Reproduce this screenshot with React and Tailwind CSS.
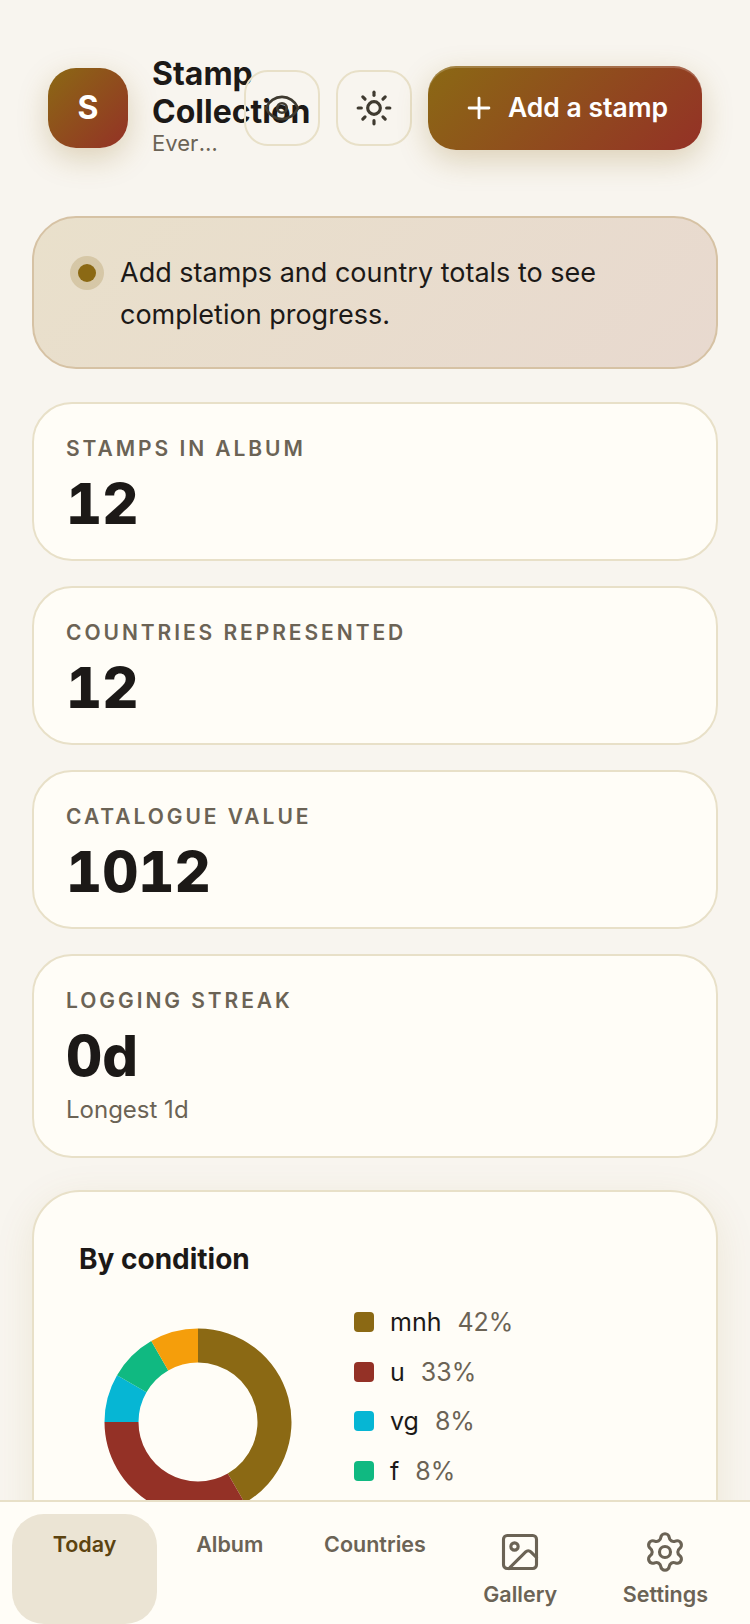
import { Eye, Sun, Plus, Image, Settings } from 'lucide-react';

const stats = [
  { label: 'Stamps in album', value: '12' },
  { label: 'Countries represented', value: '12' },
  { label: 'Catalogue value', value: '1012' },
  { label: 'Logging streak', value: '0d', sub: 'Longest 1d' },
];

const legend = [
  { label: 'mnh', pct: '42%', swatch: 'bg-[#8b6914]' },
  { label: 'u', pct: '33%', swatch: 'bg-[#943126]' },
  { label: 'vg', pct: '8%', swatch: 'bg-[#06b6d4]' },
  { label: 'f', pct: '8%', swatch: 'bg-[#10b981]' },
];

const slices = [
  { share: 5 / 12, color: '#8b6914' },
  { share: 4 / 12, color: '#943126' },
  { share: 1 / 12, color: '#06b6d4' },
  { share: 1 / 12, color: '#10b981' },
  { share: 1 / 12, color: '#f59e0b' },
];

const navItems = [
  { label: 'Today', active: true },
  { label: 'Album' },
  { label: 'Countries' },
  { label: 'Gallery', icon: Image },
  { label: 'Settings', icon: Settings },
];

const Donut = () => {
  const outer = 93.5;
  const inner = 59.5;
  const point = (r, turn) => {
    const a = turn * 2 * Math.PI;
    return `${(100 + r * Math.sin(a)).toFixed(2)} ${(100 - r * Math.cos(a)).toFixed(2)}`;
  };
  let start = 0;
  return (
    <svg width="200" height="200" viewBox="0 0 200 200">
      {slices.map(({ share, color }) => {
        const end = start + share;
        const large = share > 0.5 ? 1 : 0;
        const d = `M${point(outer, start)} A${outer} ${outer} 0 ${large} 1 ${point(outer, end)} L${point(inner, end)} A${inner} ${inner} 0 ${large} 0 ${point(inner, start)} Z`;
        start = end;
        return <path key={color} d={d} fill={color} />;
      })}
    </svg>
  );
};

const App = () => {
  return (
    <div className="relative h-[1624px] w-full overflow-hidden bg-[#f8f5ef] font-['Inter',sans-serif] text-[#1c1917]">
      {/* Header */}
      <header className="mx-[48px] mt-[66px] flex h-[84px] items-center gap-[16px]">
        <div className="flex min-w-0 flex-1 items-center gap-[24px]">
          <div className="flex h-[80px] w-[80px] shrink-0 items-center justify-center rounded-[28px] bg-[linear-gradient(135deg,#8b6914,#943126)] text-[32px] font-bold text-white shadow-[0_10px_30px_rgba(139,105,20,0.25)]">
            S
          </div>
          <div className="min-w-0 flex-1 pb-[6px]">
            <h1 className="text-[32px] leading-[38px] font-bold">Stamp Collection</h1>
            <p className="truncate text-[22px] leading-[24px] text-[#6b6355]">Every stamp</p>
          </div>
        </div>
        <button className="flex h-[76px] w-[76px] shrink-0 items-center justify-center rounded-[24px] border-2 border-[#e8e0c8] text-[#3f3a30]">
          <Eye size={38} strokeWidth={1.7} />
        </button>
        <button className="flex h-[76px] w-[76px] shrink-0 items-center justify-center rounded-[24px] border-2 border-[#e8e0c8] text-[#3f3a30]">
          <Sun size={38} strokeWidth={2} />
        </button>
        <button className="flex h-[84px] w-[274px] shrink-0 items-center justify-center gap-[12px] rounded-[28px] bg-[linear-gradient(135deg,#8b6914,#943126)] text-[26.5px] font-semibold text-white shadow-[inset_0_2px_0_rgba(255,255,255,0.2),0_10px_30px_rgba(139,105,20,0.25)]">
          <Plus size={34} strokeWidth={2} />
          Add a stamp
        </button>
      </header>

      <main className="mx-[32px] mt-[66px] flex flex-col gap-[25px]">
        {/* Banner */}
        <div className="mb-[8px] flex gap-[16px] rounded-[44px] border-2 border-[#d6c2a4] bg-[linear-gradient(135deg,#e9e0cb,#e8d9cf)] pt-[34px] pr-[32px] pb-[31px] pl-[36px]">
          <div className="flex h-[42px] w-[34px] shrink-0 items-center justify-center">
            <span className="h-[18px] w-[18px] rounded-full bg-[#8b6914] shadow-[0_0_0_8px_rgba(139,105,20,0.2)]" />
          </div>
          <p className="text-[27px] leading-[42px]">Add stamps and country totals to see completion progress.</p>
        </div>

        {/* Stats */}
        {stats.map(({ label, value, sub }) => (
          <div key={label} className="rounded-[40px] border-2 border-[#e8e0c8] bg-[#fffdf7] px-[32px] pt-[31px] pb-[21px]">
            <div className="text-[21px] leading-[28px] font-semibold tracking-[0.14em] text-[#6b6355] uppercase">{label}</div>
            <div className="mt-[7px] text-[56px] leading-[68px] font-extrabold tabular-nums">{value}</div>
            {sub && <div className="mt-[4px] mb-[9px] text-[24px] leading-[32px] text-[#6b6355]">{sub}</div>}
          </div>
        ))}

        {/* By condition */}
        <section className="mt-[7px] h-[600px] rounded-[48px] border-2 border-[#e8e0c8] bg-[#fffdf7] px-[45px] pt-[49px] shadow-[0_10px_40px_rgba(139,105,20,0.1)]">
          <h2 className="text-[28px] leading-[36px] font-bold">By condition</h2>
          <div className="mt-[29px] flex gap-[37px]">
            <div className="flex w-[238px] shrink-0 justify-center pt-[16px]">
              <Donut />
            </div>
            <ul className="flex flex-col gap-[17.5px]">
              {legend.map(({ label, pct, swatch }) => (
                <li key={label} className="flex items-center gap-[16px] text-[25px] leading-[32px]">
                  <span className={`h-[20px] w-[20px] rounded-[4px] ${swatch}`} />
                  <span>{label}</span>
                  <span className="text-[#6b6355]">{pct}</span>
                </li>
              ))}
            </ul>
          </div>
        </section>
      </main>

      {/* Bottom nav */}
      <nav className="absolute inset-x-0 bottom-0 grid h-[124px] grid-cols-5 border-t-2 border-[#e8e0c8] bg-[#fffdf7] px-[12px] pt-[12px]">
        {navItems.map(({ label, active, icon: Icon }) => (
          <div
            key={label}
            className={`flex flex-col items-center rounded-[32px] pt-[14px] text-[21.5px] leading-[32px] font-semibold ${active ? 'bg-[#ebe4d4] text-[#5c4310]' : 'text-[#6b6355]'}`}
          >
            {Icon && <Icon size={44} strokeWidth={1.7} className="mt-[2px] mb-[4px]" />}
            {label}
          </div>
        ))}
      </nav>
    </div>
  );
};

export default App;
